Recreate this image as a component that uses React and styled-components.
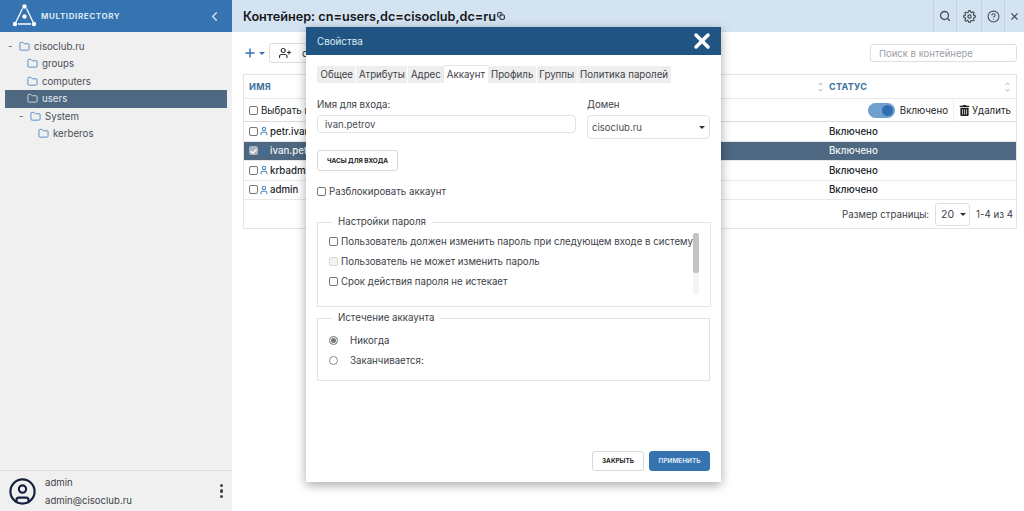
import React from 'react'
import styled, { createGlobalStyle } from 'styled-components'
import { FiChevronLeft, FiX, FiSearch, FiSettings, FiHelpCircle, FiPlus, FiUserPlus, FiCopy } from 'react-icons/fi'
import { FaTrashAlt } from 'react-icons/fa'
import { LuFolder, LuUser, LuCircleUser } from 'react-icons/lu'

const Global = createGlobalStyle`
  html, body { margin: 0; padding: 0; height: 100%; }
  body { font-family: Inter, "Noto Sans", sans-serif; color: #212529; background: #fff; overflow: hidden; }
  * { box-sizing: border-box; }
`

const Page = styled.div`
  position: relative;
  display: flex;
  width: 1024px;
  height: 511px;
`
const Sidebar = styled.aside`
  width: 232px;
  display: flex;
  flex-direction: column;
  background: #f0f0f0;
`
const Brand = styled.div`
  height: 32px;
  display: flex;
  align-items: center;
  padding: 0 10px 0 11px;
  background: #3573b1;
  color: #fff;
`
const BrandName = styled.span`
  flex: 1;
  margin-left: 3px;
  font-size: 8px;
  font-weight: 700;
  letter-spacing: 0.6px;
  color: #dbe7f3;
`
const Tree = styled.div`
  flex: 1;
  padding-top: 5.5px;
  padding-left: 5px;
  padding-right: 5px;
`
const TreeRow = styled.div`
  height: 17.5px;
  display: flex;
  align-items: center;
  padding-left: ${p => p.$indent}px;
  font-size: 9.7px;
  color: ${p => (p.$active ? '#e6ebf0' : '#4a4f55')};
  background: ${p => (p.$active ? '#4d6880' : 'transparent')};
`
const Dash = styled.span`
  width: 11px;
  font-size: 10px;
  color: #666;
`
const FolderIcon = styled(LuFolder)`
  width: 11px;
  height: 11px;
  margin-right: 4px;
  color: ${p => (p.$active ? '#d5dee6' : '#4e8ac4')};
`
const UserBar = styled.div`
  height: 41px;
  display: flex;
  align-items: center;
  padding: 0 7px 0 8px;
  border-top: 1px solid #dedede;
`
const UserTexts = styled.div`
  flex: 1;
  margin-left: 8px;
  display: flex;
  flex-direction: column;
  gap: 7px;
  font-size: 9.6px;
  padding-top: 1px;
  color: #3d4248;
`
const Dots = styled.div`
  display: flex;
  flex-direction: column;
  gap: 2px;
  margin-right: 2px;
  span { width: 3.5px; height: 3.5px; border-radius: 50%; background: #444; }
`

const Main = styled.main`
  flex: 1;
  display: flex;
  flex-direction: column;
`
const TopBar = styled.header`
  height: 32px;
  display: flex;
  align-items: center;
  padding-left: 11px;
  background: #d4e3f1;
`
const Title = styled.h1`
  flex: 1;
  margin: 0;
  font-size: 12.65px;
  font-weight: 600;
  color: #15181b;
  display: flex;
  align-items: center;
  gap: 1px;
`
const TopBtn = styled.div`
  height: 32px;
  width: ${p => p.$w}px;
  display: flex;
  align-items: center;
  justify-content: center;
  border-left: 1px solid #c4d2df;
  color: #4a4f55;
`
const Content = styled.div`
  flex: 1;
  padding: 0 7px 0 11px;
`
const Toolbar = styled.div`
  height: 42px;
  display: flex;
  align-items: center;
  justify-content: space-between;
`
const ToolLeft = styled.div`
  display: flex;
  align-items: center;
  color: #3573b1;
`
const Caret = styled.span`
  width: 0;
  height: 0;
  margin: ${p => p.$margin || '0'};
  border-left: 3.5px solid transparent;
  border-right: 3.5px solid transparent;
  border-top: 3.5px solid ${p => p.$color || '#3573b1'};
`
const ToolGroup = styled.div`
  width: 80px;
  height: 20px;
  display: flex;
  align-items: center;
  gap: 11px;
  padding-left: 9px;
  border: 1px solid #dcdcdc;
  border-radius: 3px;
  font-size: 10px;
  color: #333;
`
const Search = styled.div`
  width: 147px;
  height: 18px;
  display: flex;
  align-items: center;
  padding-left: 8px;
  border: 1px solid #dedede;
  border-radius: 3px;
  font-size: 9.5px;
  color: #9aa0a6;
`
const Table = styled.div`
  border: 1px solid #e4e4e4;
  font-size: 9.7px;
  color: #212529;
`
const Row = styled.div`
  height: ${p => p.$h}px;
  display: flex;
  align-items: center;
  padding-left: 5px;
  border-bottom: 1px solid ${p => p.$line || '#e8e8e8'};
  background: ${p => (p.$active ? '#4d6880' : '#fff')};
  color: ${p => (p.$active ? '#f1f4f7' : '#212529')};
`
const NameCell = styled.div`
  flex: 1;
  display: flex;
  align-items: center;
  gap: 1px;
  font-weight: 500;
`
const StatusCell = styled.div`
  width: 187px;
  font-weight: 500;
`
const HeadCell = styled.div`
  width: ${p => p.$w || 'auto'};
  flex: ${p => (p.$w ? 'none' : 1)};
  display: flex;
  align-items: center;
  justify-content: space-between;
  padding-right: 7px;
  font-size: 9px;
  font-weight: 700;
  letter-spacing: 0.3px;
  color: #3e6f9e;
`
const Sort = styled.span`
  display: flex;
  flex-direction: column;
  gap: 2px;
  i { display: block; width: 3px; height: 3px; border: 1px solid #b9c3cc; border-right: 0; border-bottom: 0; transform: rotate(45deg); }
  i + i { transform: rotate(225deg); }
`
const Box = styled.span`
  flex: none;
  width: 9px;
  height: 9px;
  margin-right: ${p => p.$gap || 0}px;
  display: inline-flex;
  align-items: center;
  justify-content: center;
  border: 1px solid ${p => (p.$disabled ? '#d8d8d8' : p.$checked ? '#a9b4be' : '#767676')};
  border-radius: 2px;
  background: ${p => (p.$checked ? '#a9b4be' : p.$disabled ? '#f2f2f2' : '#fff')};
  font-size: 9px;
  font-weight: 700;
  line-height: 1;
  color: #fff;
`
const SelectAll = styled.div`
  flex: 1;
  display: flex;
  align-items: center;
  gap: 3px;
`
const Toggle = styled.span`
  width: 27px;
  height: 15px;
  margin-right: 5px;
  padding: 2px;
  display: flex;
  justify-content: flex-end;
  border-radius: 8px;
  background: #6f9fcd;
  &::after { content: ''; width: 11px; height: 11px; border-radius: 50%; background: #2f6fb0; }
`
const Divider = styled.span`
  width: 1px;
  height: 22px;
  margin: 0 5px;
  background: #eeeeee;
`
const RemoveBtn = styled.span`
  display: flex;
  align-items: center;
  gap: 2px;
  margin-right: 5px;
`
const Pager = styled.div`
  height: 28px;
  display: flex;
  align-items: center;
  justify-content: flex-end;
  gap: 6px;
  padding-right: 3px;
  font-size: 9.7px;
  color: #3d4248;
`
const PageSelect = styled.div`
  width: 35px;
  height: 23px;
  display: flex;
  align-items: center;
  justify-content: space-between;
  padding: 0 3px 0 5px;
  border: 1px solid #dedede;
  border-radius: 3px;
  font-size: 10.5px;
`

const Modal = styled.section`
  position: absolute;
  left: 306px;
  top: 27px;
  width: 415px;
  height: 455px;
  display: flex;
  flex-direction: column;
  background: #fff;
  box-shadow: 0 3px 10px rgba(0, 0, 0, 0.35);
`
const ModalHead = styled.div`
  height: 28px;
  flex: none;
  display: flex;
  align-items: center;
  justify-content: space-between;
  padding: 0 7px 0 11px;
  background: #205583;
  color: #dfe9f2;
  font-size: 9.8px;
`
const ModalBody = styled.div`
  flex: 1;
  display: flex;
  flex-direction: column;
  padding: 11px;
  font-size: 9.7px;
  color: #3d4248;
`
const Tabs = styled.div`
  display: flex;
  align-self: flex-start;
  height: 17px;
`
const Tab = styled.div`
  display: flex;
  align-items: center;
  padding: 0 2.5px;
  font-size: 9.7px;
  white-space: nowrap;
  border-right: 1px solid #fff;
  background: ${p => (p.$active ? '#fff' : '#eeeeee')};
  color: #3d4248;
  &:first-child { padding-left: 3.5px; }
  ${p => p.$active && 'box-shadow: 0 -1px 0 #e6e6e6, 1px 0 0 #e6e6e6, -1px 0 0 #e6e6e6;'}
`
const LoginGrid = styled.div`
  display: grid;
  grid-template-columns: 259px 123px;
  column-gap: 11px;
  margin-top: 16px;
`
const Field = styled.div`
  display: flex;
  flex-direction: column;
  gap: 5px;
  align-items: stretch;
`
const TextBox = styled.div`
  height: ${p => p.$h}px;
  display: flex;
  align-items: center;
  justify-content: space-between;
  padding: 0 4px 0 ${p => p.$pad}px;
  border: 1px solid #e3e3e3;
  border-radius: 4px;
  color: #4a4f55;
  font-size: 9.6px;
`
const SmallBtn = styled.button`
  width: ${p => p.$w}px;
  height: ${p => p.$h || 20}px;
  padding: 0;
  font-family: inherit;
  font-size: 6.4px;
  font-weight: 700;
  text-transform: uppercase;
  border-radius: 3px;
  border: 1px solid ${p => (p.$primary ? '#3573b1' : '#d8d8d8')};
  background: ${p => (p.$primary ? '#3573b1' : '#fff')};
  color: ${p => (p.$primary ? '#dfe9f2' : '#222')};
`
const HoursRow = styled.div`
  margin-top: 11px;
  line-height: 0;
`
const CheckRow = styled.label`
  display: flex;
  align-items: center;
  gap: 3px;
  height: 20px;
`
const UnlockRow = styled(CheckRow)`
  margin-top: 10px;
`
const Group = styled.fieldset`
  margin: ${p => p.$top}px 0 0;
  padding: 0 ${p => p.$right || 0}px 0 11px;
  height: ${p => p.$h}px;
  border: 1px solid #e3e3e3;
  legend {
    margin-left: 3px;
    padding: 0 6px;
    font-size: 9.7px;
    line-height: 12px;
    color: #3d4248;
  }
`
const GroupInner = styled.div`
  display: flex;
  justify-content: space-between;
`
const CheckList = styled.div`
  padding-top: 3px;
  white-space: nowrap;
`
const Track = styled.div`
  width: 6px;
  height: 62px;
  margin-top: 5px;
  background: #f4f4f4;
  &::before { content: ''; display: block; width: 6px; height: 40px; background: #c3c3c3; border-radius: 2px; }
`
const RadioList = styled.div`
  padding-top: 6px;
`
const RadioRow = styled.div`
  display: flex;
  align-items: center;
  gap: 12px;
  height: 20px;
`
const Radio = styled.span`
  width: 9px;
  height: 9px;
  border-radius: 50%;
  border: 1px solid #8a8a8a;
  background: ${p => (p.$on ? '#777' : '#fff')};
  box-shadow: ${p => (p.$on ? 'inset 0 0 0 1px #fff' : 'none')};
`
const ModalFoot = styled.div`
  margin-top: auto;
  display: flex;
  justify-content: flex-end;
  gap: 5px;
`

const treeItems = [
  { name: 'cisoclub.ru', indent: 3, dash: true },
  { name: 'groups', indent: 22 },
  { name: 'computers', indent: 22 },
  { name: 'users', indent: 22, active: true },
  { name: 'System', indent: 14, dash: true },
  { name: 'kerberos', indent: 33 },
]
const users = [
  { name: 'petr.ivanov' },
  { name: 'ivan.petrov', active: true },
  { name: 'krbadmin' },
  { name: 'admin' },
]
const tabs = ['Общее', 'Атрибуты', 'Адрес', 'Аккаунт', 'Профиль', 'Группы', 'Политика паролей']

const Logo = () => (
  <svg width="27" height="26" viewBox="0 0 27 26" fill="none" stroke="#fff" strokeWidth="1.3">
    <path d="M11.5 5.5 L5 19 M15.5 5.5 L22 19 M7 21 H20" />
    <circle cx="13.5" cy="3.5" r="2.2" fill="#fff" stroke="none" />
    <circle cx="13.5" cy="13.5" r="2.2" fill="#fff" stroke="none" />
    <circle cx="4" cy="21" r="2.2" fill="#fff" stroke="none" />
    <circle cx="23" cy="21" r="2.2" fill="#fff" stroke="none" />
  </svg>
)

const App = () => {
  return (
    <Page>
      <Global />
      <Sidebar>
        <Brand>
          <Logo />
          <BrandName>MULTIDIRECTORY</BrandName>
          <FiChevronLeft size={15} color="#dbe7f3" />
        </Brand>
        <Tree>
          {treeItems.map(item => (
            <TreeRow key={item.name} $indent={item.indent} $active={item.active}>
              {item.dash && <Dash>-</Dash>}
              <FolderIcon $active={item.active} />
              {item.name}
            </TreeRow>
          ))}
        </Tree>
        <UserBar>
          <LuCircleUser size={29} color="#14203d" strokeWidth={1.8} />
          <UserTexts>
            <span>admin</span>
            <span>admin@cisoclub.ru</span>
          </UserTexts>
          <Dots><span /><span /><span /></Dots>
        </UserBar>
      </Sidebar>

      <Main>
        <TopBar>
          <Title>Контейнер: cn=users,dc=cisoclub,dc=ru<FiCopy size={8} strokeWidth={3} /></Title>
          <TopBtn $w={23}><FiSearch size={12} strokeWidth={2.6} /></TopBtn>
          <TopBtn $w={25}><FiSettings size={13} strokeWidth={2.2} /></TopBtn>
          <TopBtn $w={23}><FiHelpCircle size={13} /></TopBtn>
          <TopBtn $w={20}><FiX size={11} strokeWidth={2.4} /></TopBtn>
        </TopBar>
        <Content>
          <Toolbar>
            <ToolLeft>
              <FiPlus size={14} strokeWidth={2.5} />
              <Caret $margin="0 4px 0 2px" />
              <ToolGroup><FiUserPlus size={12} strokeWidth={2.4} />c</ToolGroup>
            </ToolLeft>
            <Search>Поиск в контейнере</Search>
          </Toolbar>
          <Table>
            <Row $h={24}>
              <HeadCell>ИМЯ<Sort><i /><i /></Sort></HeadCell>
              <HeadCell $w="187px">СТАТУС<Sort><i /><i /></Sort></HeadCell>
            </Row>
            <Row $h={23} $line="#dcdcdc">
              <SelectAll><Box />Выбрать все</SelectAll>
              <Toggle />
              Включено
              <Divider />
              <RemoveBtn><FaTrashAlt size={11} color="#222" />Удалить</RemoveBtn>
            </Row>
            {users.map(u => (
              <Row key={u.name} $h={19.5} $active={u.active}>
                <NameCell>
                  <Box $checked={u.active}>{u.active && '✓'}</Box>
                  <LuUser size={10} strokeWidth={2.6} color={u.active ? '#3573b1' : '#4e8ac4'} />
                  {u.name}
                </NameCell>
                <StatusCell>Включено</StatusCell>
              </Row>
            ))}
            <Pager>
              Размер страницы:
              <PageSelect>20<Caret $color="#333" /></PageSelect>
              <span>1-4 из 4</span>
            </Pager>
          </Table>
        </Content>
      </Main>

      <Modal>
        <ModalHead>
          Свойства
          <FiX size={24} strokeWidth={3.5} color="#fff" />
        </ModalHead>
        <ModalBody>
          <Tabs>
            {tabs.map(t => <Tab key={t} $active={t === 'Аккаунт'}>{t}</Tab>)}
          </Tabs>
          <LoginGrid>
            <Field>
              Имя для входа:
              <TextBox $h={18} $pad={7}>ivan.petrov</TextBox>
            </Field>
            <Field>
              Домен
              <TextBox $h={24} $pad={4}>cisoclub.ru<Caret $color="#333" /></TextBox>
            </Field>
          </LoginGrid>
          <HoursRow><SmallBtn $w={81} $h={21}>Часы для входа</SmallBtn></HoursRow>
          <UnlockRow><Box />Разблокировать аккаунт</UnlockRow>
          <Group $top={15} $h={91} $right={11}>
            <legend>Настройки пароля</legend>
            <GroupInner>
              <CheckList>
                <CheckRow><Box />Пользователь должен изменить пароль при следующем входе в систему</CheckRow>
                <CheckRow><Box $disabled />Пользователь не может изменить пароль</CheckRow>
                <CheckRow><Box />Срок действия пароля не истекает</CheckRow>
              </CheckList>
              <Track />
            </GroupInner>
          </Group>
          <Group $top={5} $h={69}>
            <legend>Истечение аккаунта</legend>
            <RadioList>
              <RadioRow><Radio $on />Никогда</RadioRow>
              <RadioRow><Radio />Заканчивается:</RadioRow>
            </RadioList>
          </Group>
          <ModalFoot>
            <SmallBtn $w={52}>Закрыть</SmallBtn>
            <SmallBtn $w={61} $primary>Применить</SmallBtn>
          </ModalFoot>
        </ModalBody>
      </Modal>
    </Page>
  )
}

export default App
